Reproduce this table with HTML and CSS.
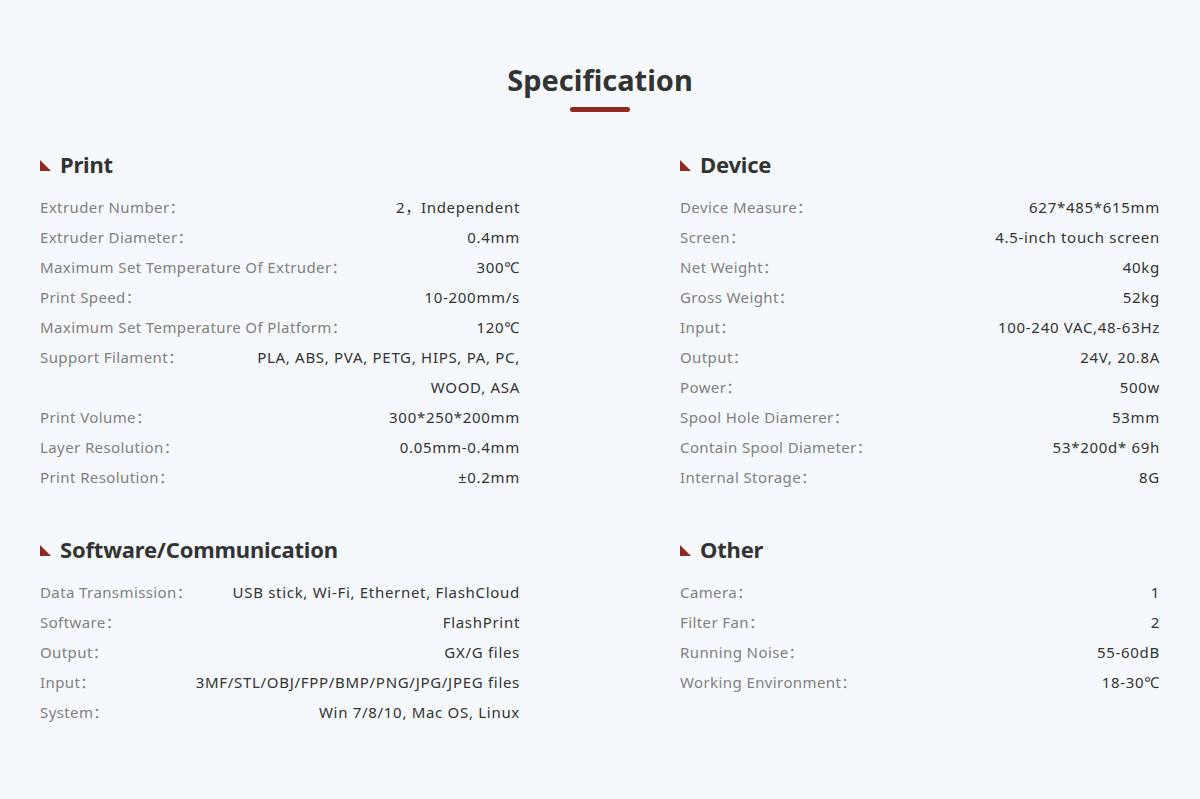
FILE: index.html
```html
<!DOCTYPE html>
<html lang="en">
<head>
<meta charset="utf-8">
<title>Specification</title>
<link rel="stylesheet" href="styles.css">
</head>
<body>
<main class="spec">
  <h1 class="spec-title">Specification</h1>
  <div class="spec-bar"></div>
  <div class="spec-grid">
    <section class="group">
      <h2 class="group-title"><span class="mark"></span>Print</h2>
      <div class="row"><span class="label">Extruder Number：</span><span class="value">2，Independent</span></div>
      <div class="row"><span class="label">Extruder Diameter：</span><span class="value">0.4mm</span></div>
      <div class="row"><span class="label">Maximum Set Temperature Of Extruder：</span><span class="value">300℃</span></div>
      <div class="row"><span class="label">Print Speed：</span><span class="value">10-200mm/s</span></div>
      <div class="row"><span class="label">Maximum Set Temperature Of Platform：</span><span class="value">120℃</span></div>
      <div class="row"><span class="label">Support Filament：</span><span class="value value-narrow">PLA, ABS, PVA, PETG, HIPS, PA, PC, WOOD, ASA</span></div>
      <div class="row"><span class="label">Print Volume：</span><span class="value">300*250*200mm</span></div>
      <div class="row"><span class="label">Layer Resolution：</span><span class="value">0.05mm-0.4mm</span></div>
      <div class="row"><span class="label">Print Resolution：</span><span class="value">±0.2mm</span></div>
    </section>
    <section class="group">
      <h2 class="group-title"><span class="mark"></span>Device</h2>
      <div class="row"><span class="label">Device Measure：</span><span class="value">627*485*615mm</span></div>
      <div class="row"><span class="label">Screen：</span><span class="value">4.5-inch touch screen</span></div>
      <div class="row"><span class="label">Net Weight：</span><span class="value">40kg</span></div>
      <div class="row"><span class="label">Gross Weight：</span><span class="value">52kg</span></div>
      <div class="row"><span class="label">Input：</span><span class="value">100-240 VAC,48-63Hz</span></div>
      <div class="row"><span class="label">Output：</span><span class="value">24V, 20.8A</span></div>
      <div class="row"><span class="label">Power：</span><span class="value">500w</span></div>
      <div class="row"><span class="label">Spool Hole Diamerer：</span><span class="value">53mm</span></div>
      <div class="row"><span class="label">Contain Spool Diameter：</span><span class="value">53*200d* 69h</span></div>
      <div class="row"><span class="label">Internal Storage：</span><span class="value">8G</span></div>
    </section>
    <section class="group">
      <h2 class="group-title"><span class="mark"></span>Software/Communication</h2>
      <div class="row"><span class="label">Data Transmission：</span><span class="value">USB stick, Wi-Fi, Ethernet, FlashCloud</span></div>
      <div class="row"><span class="label">Software：</span><span class="value">FlashPrint</span></div>
      <div class="row"><span class="label">Output：</span><span class="value">GX/G files</span></div>
      <div class="row"><span class="label">Input：</span><span class="value">3MF/STL/OBJ/FPP/BMP/PNG/JPG/JPEG files</span></div>
      <div class="row"><span class="label">System：</span><span class="value">Win 7/8/10, Mac OS, Linux</span></div>
    </section>
    <section class="group">
      <h2 class="group-title"><span class="mark"></span>Other</h2>
      <div class="row"><span class="label">Camera：</span><span class="value">1</span></div>
      <div class="row"><span class="label">Filter Fan：</span><span class="value">2</span></div>
      <div class="row"><span class="label">Running Noise：</span><span class="value">55-60dB</span></div>
      <div class="row"><span class="label">Working Environment：</span><span class="value">18-30℃</span></div>
    </section>
  </div>
</main>
</body>
</html>
```
FILE: styles.css
```css
html, body {
  margin: 0;
  padding: 0;
}
body {
  background: #f5f9fd;
  font-family: "Noto Sans", "Noto Sans CJK SC", sans-serif;
  color: #333;
}
.spec {
  width: 1120px;
  margin: 0 auto;
  padding-top: 60px;
  padding-bottom: 60px;
}
.spec-title {
  margin: 0;
  text-align: center;
  font-size: 29px;
  line-height: 40px;
  font-weight: 700;
  color: #333;
}
.spec-bar {
  width: 60px;
  height: 5px;
  border-radius: 3px;
  background: #8e2a20;
  margin: 7px auto 0;
}
.spec-grid {
  display: grid;
  grid-template-columns: 480px 480px;
  column-gap: 160px;
  row-gap: 42px;
  margin-top: 37px;
}
.group-title {
  margin: 0 0 13px;
  display: flex;
  align-items: center;
  font-size: 22px;
  line-height: 30px;
  font-weight: 700;
  letter-spacing: -0.2px;
  color: #333;
}
.mark {
  width: 0;
  height: 0;
  border-left: 11px solid #8e2a20;
  border-top: 11px solid transparent;
  margin-right: 9px;
  margin-top: 3px;
}
.row {
  display: flex;
  justify-content: space-between;
  font-size: 15px;
  line-height: 30px;
}
.label {
  flex: none;
  color: #808080;
  letter-spacing: 0.4px;
}
.value {
  text-align: right;
  color: #333;
  letter-spacing: 0.7px;
}
.value-narrow {
  max-width: 275px;
}
```
